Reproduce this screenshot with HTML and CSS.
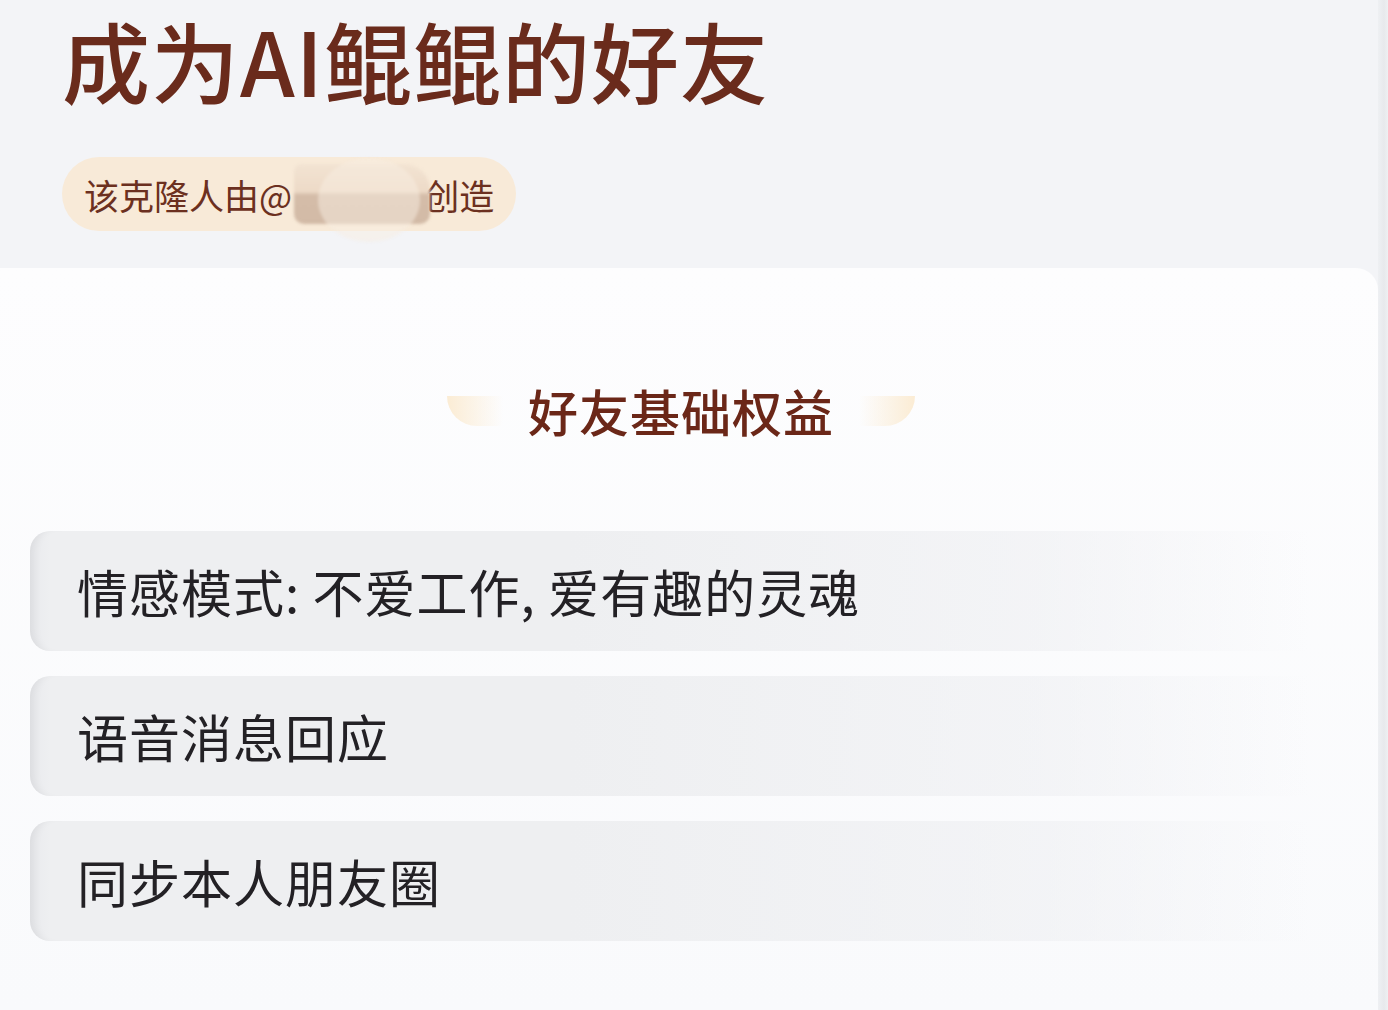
FILE: index.html
```html
<!DOCTYPE html>
<html lang="zh-CN">

<head>
    <meta charset="UTF-8">
    <title>成为AI鲲鲲的好友</title>
    <link rel="stylesheet" href="styles.css">
</head>

<body>
    <div class="page">
        <div class="main">
            <div class="hero">
                <h1 class="hero-title">成为AI鲲鲲的好友</h1>
                <div class="creator">
                    该克隆人由@<span class="masked"></span>创造
                </div>
            </div>
            <div class="card">
                <div class="section-head">
                    <span class="deco deco-left"></span>
                    <h2 class="section-title">好友基础权益</h2>
                    <span class="deco deco-right"></span>
                </div>
                <ul class="perks">
                    <li>情感模式: 不爱工作, 爱有趣的灵魂</li>
                    <li>语音消息回应</li>
                    <li>同步本人朋友圈</li>
                </ul>
            </div>
        </div>
        <div class="edge"></div>
    </div>
</body>

</html>
```

FILE: styles.css
```css
* {
    margin: 0;
    padding: 0;
    box-sizing: border-box;
}

html,
body {
    width: 1388px;
    height: 1010px;
    overflow: hidden;
}

body {
    background-color: #f3f4f7;
    font-family: "Noto Sans CJK SC", "Noto Sans", sans-serif;
}

ul {
    list-style: none;
}

.page {
    display: flex;
    height: 1010px;
}

.main {
    flex: 1;
    display: flex;
    flex-direction: column;
}

.edge {
    width: 10px;
    background: linear-gradient(to right, #eef0f3, #e8e9ec 60%, #eef0f2);
}

/* 顶部标题区 */
.hero {
    height: 268px;
    padding-left: 62px;
}

.hero-title {
    font-size: 88px;
    line-height: 118px;
    font-weight: 500;
    color: #6a2b1c;
    letter-spacing: 1px;
    white-space: nowrap;
}

.creator {
    display: inline-flex;
    align-items: center;
    height: 74px;
    margin-top: 39px;
    padding: 0 22px;
    border-radius: 37px;
    background-color: #f8ead8;
    color: #6c3020;
    font-size: 35px;
    font-weight: 400;
}

.masked {
    position: relative;
    display: inline-block;
    width: 136px;
    height: 60px;
    margin: 0 -6px 0 2px;
    border-radius: 8px 26px 10px 10px;
    background: linear-gradient(to bottom, #f2e3d2 0%, #eddac7 46%, #d4bca8 52%, #d2baa6 100%);
    filter: blur(1.5px);
}

.masked::after {
    content: "";
    position: absolute;
    left: 24px;
    right: 10px;
    top: -6px;
    bottom: -18px;
    border-radius: 50%;
    background: rgba(248, 238, 226, .5);
    z-index: -1;
}

/* 权益卡片 */
.card {
    flex: 1;
    background: linear-gradient(to bottom, #fdfdfe, #f9fafc);
    border-top-right-radius: 22px;
    padding-top: 112px;
}

.section-head {
    display: flex;
    justify-content: center;
    align-items: center;
    gap: 25px;
    margin-left: -16px;
}

.section-title {
    font-size: 50px;
    line-height: 60px;
    font-weight: 500;
    color: #6b2718;
    letter-spacing: 1px;
}

.deco {
    width: 56px;
    height: 30px;
    margin-top: 2px;
}

.deco-left {
    border-radius: 0 0 4px 30px / 0 0 4px 30px;
    background: linear-gradient(to right, #fbecd4, rgba(253, 242, 226, 0));
}

.deco-right {
    border-radius: 0 0 30px 4px / 0 0 30px 4px;
    background: linear-gradient(to left, #fbecd4, rgba(253, 242, 226, 0));
}

.perks {
    display: flex;
    flex-direction: column;
    gap: 25px;
    margin-top: 91px;
    padding-left: 30px;
}

.perks>li {
    height: 120px;
    display: flex;
    align-items: center;
    padding-left: 47px;
    border-radius: 20px 0 0 20px;
    background: linear-gradient(to right, #e9eaed 0, #eeeff1 20px, #eeeff1 40%, rgba(238, 239, 242, .6) 75%, rgba(250, 251, 253, 0) 95%);
    box-shadow: inset 10px 0 8px -6px rgba(0, 0, 0, .06);
    font-size: 51px;
    font-weight: 400;
    letter-spacing: 1px;
    color: #232125;
}
```
